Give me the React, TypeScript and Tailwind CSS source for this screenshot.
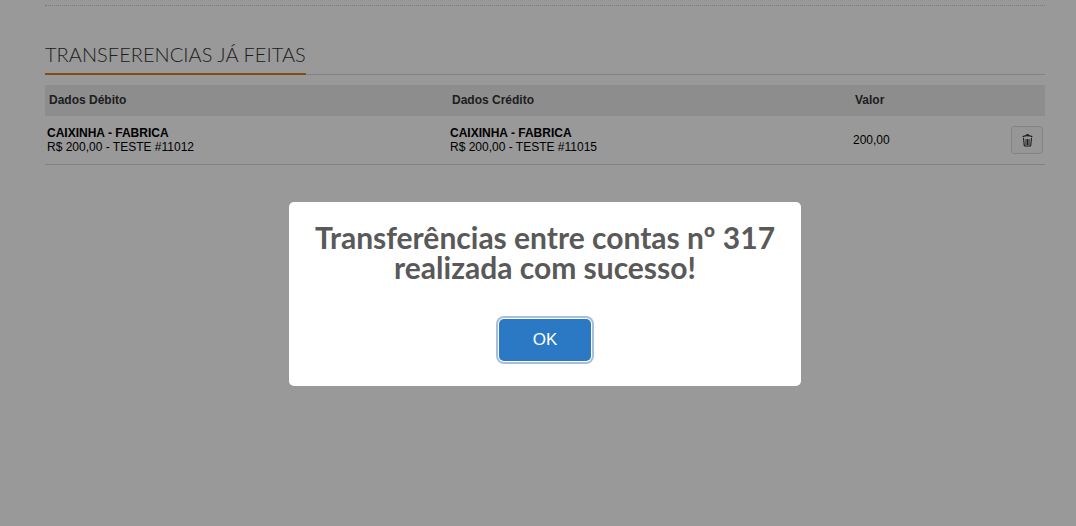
const arial = "font-['Liberation_Sans',Arial,sans-serif]";

function TrashIcon() {
  return (
    <svg width="11" height="13" viewBox="0 0 11 13" className="text-[#222222]" fill="none" stroke="currentColor">
      <path d="M4 1.5 L4.5 .5 H6.5 L7 1.5" strokeWidth=".8" />
      <path d="M.8 3 C2 1.2 9 1.2 10.2 3" strokeWidth="1.3" />
      <path d="M1.5 4 L2.3 12 H8.7 L9.5 4" strokeWidth="1" />
      <path d="M4 5 V11 M5.5 5 V11 M7 5 V11" strokeWidth=".9" />
    </svg>
  );
}

function Transferencias() {
  return (
    <div className={`min-h-[526px] w-full bg-white px-[45px] text-black ${arial}`}>
      <div className="h-[6px] border-b border-dotted border-[#cccccc]" />

      <div className="mt-[36px] flex h-[33px] border-b border-[#d9d9d9]">
        <h2 className="h-[33px] border-b-2 border-[#d9801f] font-['Lato',sans-serif] text-[20px] leading-[24px] font-light tracking-[0.04px] text-[#333333]">
          TRANSFERENCIAS JÁ FEITAS
        </h2>
      </div>

      <div className="mt-[10px] grid h-[31px] grid-cols-[403px_403px_1fr] items-center bg-[#ebebeb] px-1 pb-0.5 text-[12px] font-bold text-[#333333]">
        <span>Dados Débito</span>
        <span>Dados Crédito</span>
        <span>Valor</span>
      </div>

      <div className="grid h-[49px] grid-cols-[403px_403px_1fr_auto] items-center border-b border-[#d9d9d9] pr-0.5 pl-0.5 text-[12px] leading-[14px]">
        <div>
          <div className="font-bold">CAIXINHA - FABRICA</div>
          <div>R$ 200,00 - TESTE #11012</div>
        </div>
        <div>
          <div className="font-bold">CAIXINHA - FABRICA</div>
          <div>R$ 200,00 - TESTE #11015</div>
        </div>
        <div>200,00</div>
        <button className="flex h-[28px] w-[32px] items-center justify-center rounded-[3px] border border-[#dddddd] bg-[#fafafa]">
          <TrashIcon />
        </button>
      </div>
    </div>
  );
}

export default function App() {
  return (
    <div className="h-[526px] w-full overflow-hidden">
      <div className="relative h-[526px] w-[1090px]">
        <Transferencias />
        <div className="absolute inset-0 flex items-start justify-center bg-black/40 pt-[202px]">
          <div className="flex h-[184px] w-[512px] flex-col items-center rounded-[5px] bg-white pt-[20px]">
            <h2 className="text-center font-['Lato',sans-serif] text-[30px] leading-[30px] font-bold text-[#595959]">
              Transferências entre contas nº 317
              <br />
              realizada com sucesso!
            </h2>
            <button
              className={`mt-[37px] h-[42px] w-[92px] rounded-[5px] bg-[#2b78c5] text-[17px] text-white ring-2 ring-[#a9bfd8] ring-offset-1 ring-offset-white ${arial}`}
            >
              OK
            </button>
          </div>
        </div>
      </div>
    </div>
  );
}
